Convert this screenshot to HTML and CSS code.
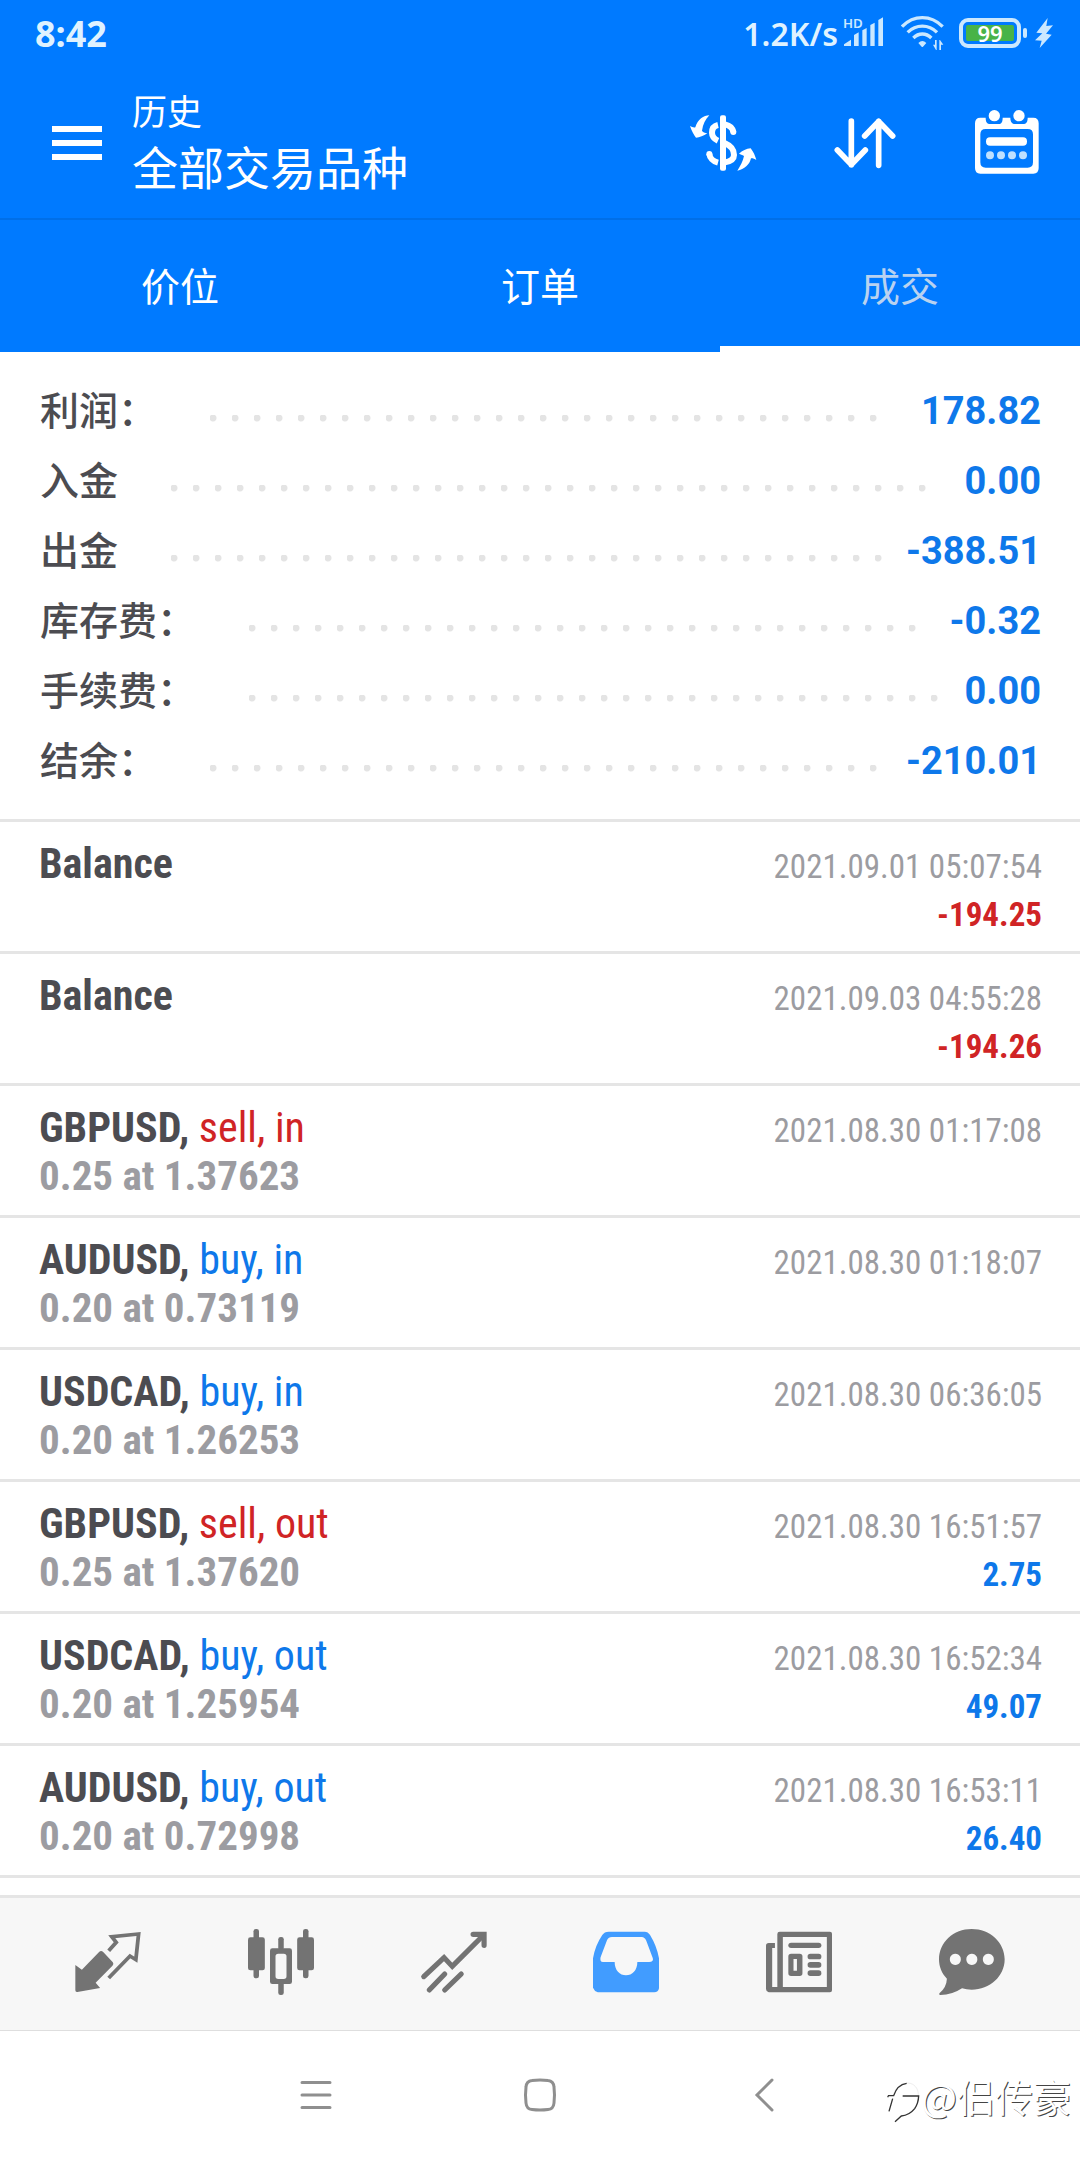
FILE: index.html
```html
<!DOCTYPE html>
<html lang="zh-CN">
<head>
<meta charset="utf-8">
<meta name="viewport" content="width=device-width, initial-scale=1">
<title>历史</title>
<link rel="stylesheet" href="styles.css">
</head>
<body>
<div class="app">
  <header class="header">
    <div class="status">
      <span class="status-clock">8:42</span>
      <span class="status-rate">1.2K/s</span>
      <svg class="status-signal" viewBox="0 -24 129 153" aria-hidden="true">
        <text x="0" y="37" class="hd">HD</text>
        <path d="M3 90V85L24 71V90ZM33 90V57L47 49V90ZM58 90V43L71 36V90ZM82 90V27L95 20V90ZM106 90V12L120 4V90Z"/>
      </svg>
      <svg class="status-wifi" viewBox="0 0 129 105" aria-hidden="true">
        <g class="line">
          <path d="M3 32C38-4 90-4 125 32"/>
          <path d="M20 49C45 24 83 24 108 49"/>
          <path d="M37 66C53 50 75 50 91 66"/>
        </g>
        <path d="M52 81Q64 69 76 81L66 92Q64 94 62 92ZM96 86H102V72H107V102H105ZM115 72V102H120V86H127L117 72Z"/>
      </svg>
      <span class="battery"><span class="battery-level">99</span></span>
      <svg class="status-bolt" viewBox="0 0 54 90" aria-hidden="true">
        <path d="M38 0L4 44L22 46L0 67L20 68L14 90L50 50L33 47L54 22L34 24Z"/>
      </svg>
    </div>
    <div class="toolbar">
      <button class="menu-btn" type="button" aria-label="菜单"><span></span><span></span><span></span></button>
      <div class="heading">
        <p class="heading-sub">历史</p>
        <h1 class="heading-main">全部交易品种</h1>
      </div>
      <div class="actions">
        <button class="action" type="button" aria-label="货币">
          <svg viewBox="0 0 216 216">
            <path d="M67 28C50 28 32 40 25 64C20 66 14 62 9 60C14 75 20 86 27 95C38 94 50 90 61 82C54 81 47 79 45 74C48 55 55 40 67 28Z"/>
            <path d="M151 194C160 180 168 165 171 150C166 146 160 145 156 143C166 134 178 128 191 127C199 137 205 150 208 162C202 158 196 156 192 157C188 176 172 190 151 194Z"/>
            <rect x="99" y="28" width="18" height="166" rx="6"/>
            <g class="stroke-m">
              <path d="M93 57C80 60 75 70 75 80C75 92 82 99 93 104"/>
              <path d="M114 55C128 58 137 66 139 78"/>
              <path d="M114 112C133 120 141 132 141 147C141 160 131 166 114 169"/>
              <path d="M67 143C68 155 78 166 93 170"/>
            </g>
            <circle cx="139" cy="78" r="9"/><circle cx="67" cy="144" r="9"/>
          </svg>
        </button>
        <button class="action" type="button" aria-label="排序">
          <svg viewBox="0 0 216 216">
            <g class="stroke-round">
              <path d="M67 45V176M25 132L67 176L109 132M149 178V46M107 90L149 46L191 90"/>
            </g>
          </svg>
        </button>
        <button class="action" type="button" aria-label="日期">
          <svg viewBox="0 0 216 216">
            <path fill-rule="evenodd" d="M28 35H44C44 48 48 54 58 54H83C91 54 95 48 95 35H118C118 48 124 54 132 54H156C166 54 170 48 170 35H187Q203 35 203 52V186Q203 203 187 203H28Q12 203 12 186V52Q12 35 28 35ZM44 69Q28 69 28 85V169Q28 185 44 185H170Q186 185 186 169V85Q186 69 170 69Z"/>
            <circle cx="70" cy="29" r="17"/><circle cx="144" cy="29" r="17"/>
            <rect x="45" y="94" width="123" height="25" rx="12"/>
            <g class="pale"><circle cx="57" cy="148" r="12"/><circle cx="90" cy="148" r="12"/><circle cx="123" cy="148" r="12"/><circle cx="156" cy="148" r="12"/></g>
          </svg>
        </button>
      </div>
    </div>
    <div class="tabs" role="tablist">
      <button class="tab" type="button" role="tab">价位</button>
      <button class="tab" type="button" role="tab">订单</button>
      <button class="tab tab-current" type="button" role="tab" aria-selected="true">成交</button>
    </div>
  </header>

  <main>
    <dl class="summary">
      <div class="sum-row"><dt>利润：</dt><dd class="dots"></dd><dd class="sum-value">178.82</dd></div>
      <div class="sum-row"><dt>入金</dt><dd class="dots"></dd><dd class="sum-value">0.00</dd></div>
      <div class="sum-row"><dt>出金</dt><dd class="dots"></dd><dd class="sum-value">-388.51</dd></div>
      <div class="sum-row"><dt>库存费：</dt><dd class="dots"></dd><dd class="sum-value">-0.32</dd></div>
      <div class="sum-row"><dt>手续费：</dt><dd class="dots"></dd><dd class="sum-value">0.00</dd></div>
      <div class="sum-row"><dt>结余：</dt><dd class="dots"></dd><dd class="sum-value">-210.01</dd></div>
    </dl>
    <ul class="deals">
      <li class="deal"><span class="deal-name">Balance</span><time class="deal-time">2021.09.01 05:07:54</time><span class="deal-size"></span><span class="deal-profit sell">-194.25</span></li>
      <li class="deal"><span class="deal-name">Balance</span><time class="deal-time">2021.09.03 04:55:28</time><span class="deal-size"></span><span class="deal-profit sell">-194.26</span></li>
      <li class="deal"><span class="deal-name">GBPUSD, <span class="deal-type sell">sell, in</span></span><time class="deal-time">2021.08.30 01:17:08</time><span class="deal-size">0.25 at 1.37623</span></li>
      <li class="deal"><span class="deal-name">AUDUSD, <span class="deal-type buy">buy, in</span></span><time class="deal-time">2021.08.30 01:18:07</time><span class="deal-size">0.20 at 0.73119</span></li>
      <li class="deal"><span class="deal-name">USDCAD, <span class="deal-type buy">buy, in</span></span><time class="deal-time">2021.08.30 06:36:05</time><span class="deal-size">0.20 at 1.26253</span></li>
      <li class="deal"><span class="deal-name">GBPUSD, <span class="deal-type sell">sell, out</span></span><time class="deal-time">2021.08.30 16:51:57</time><span class="deal-size">0.25 at 1.37620</span><span class="deal-profit buy">2.75</span></li>
      <li class="deal"><span class="deal-name">USDCAD, <span class="deal-type buy">buy, out</span></span><time class="deal-time">2021.08.30 16:52:34</time><span class="deal-size">0.20 at 1.25954</span><span class="deal-profit buy">49.07</span></li>
      <li class="deal"><span class="deal-name">AUDUSD, <span class="deal-type buy">buy, out</span></span><time class="deal-time">2021.08.30 16:53:11</time><span class="deal-size">0.20 at 0.72998</span><span class="deal-profit buy">26.40</span></li>
    </ul>
  </main>

  <nav class="bottom-nav">
    <button class="nav-btn" type="button" aria-label="行情">
      <svg viewBox="0 0 192 198" preserveAspectRatio="none">
        <path d="M1 108L20 122L70 69Q76 63 82 69L110 100Q114 105 109 110L60 161L73 177L7 189Q1 190 1 184Z"/>
        <path class="outline-11" d="M98 65L120 40L107 23L185 15L177 92L160 81L98 147"/>
      </svg>
    </button>
    <button class="nav-btn" type="button" aria-label="图表">
      <svg viewBox="0 0 192 198" preserveAspectRatio="none">
        <rect x="16" width="16" height="148" rx="7"/><rect x="160" width="16" height="148" rx="7"/>
        <rect y="25" width="49" height="99" rx="7"/><rect x="143" y="25" width="49" height="99" rx="7"/>
        <rect x="88" y="24" width="16" height="40" rx="7"/><rect x="88" y="158" width="16" height="40" rx="7"/>
        <path fill-rule="evenodd" d="M71 58H121Q128 58 128 65V158Q128 165 121 165H71Q64 165 64 158V65Q64 58 71 58ZM88 74Q80 74 80 82V142Q80 150 88 150H104Q112 150 112 142V82Q112 74 104 74Z"/>
      </svg>
    </button>
    <button class="nav-btn" type="button" aria-label="交易">
      <svg viewBox="0 0 192 198" preserveAspectRatio="none">
        <g class="outline-15">
          <path d="M8 143L67 86L91 112L180 20"/>
          <path d="M24 183L69 135M69 183L117 135"/>
        </g>
        <path d="M152 8H191V49Q191 57 184 57Q176 57 176 49V24H152Q144 24 144 16Q144 8 152 8Z"/>
      </svg>
    </button>
    <button class="nav-btn nav-current" type="button" aria-label="历史">
      <svg viewBox="0 0 192 198" preserveAspectRatio="none">
        <path fill-rule="evenodd" d="M46 8H150Q160 8 166 18Q186 52 192 88V178Q190 190 178 190H14Q4 187 0 176V88Q6 50 27 18Q33 8 46 8ZM55 24Q45 24 41 33L22 85Q19 99 29 99H63C63 124 78 139 96 139C114 139 129 124 129 99H163Q177 99 174 88L155 35Q150 24 142 24Z"/>
      </svg>
    </button>
    <button class="nav-btn" type="button" aria-label="新闻">
      <svg viewBox="0 0 192 198" preserveAspectRatio="none">
        <path fill-rule="evenodd" d="M40 8H186Q192 8 192 14V184Q192 190 186 190H8Q0 188 0 180V50Q0 42 8 42H26V57H18V174H33V15Q33 8 40 8ZM49 24V174H177V24Z"/>
        <rect x="65" y="41" width="96" height="16" rx="8"/>
        <path fill-rule="evenodd" d="M73 74H98Q106 74 106 82V133Q106 141 98 141H73Q65 141 65 133V82Q65 74 73 74ZM80 90V125H90V90Z"/>
        <rect x="121" y="74" width="40" height="17" rx="8"/><rect x="121" y="99" width="40" height="17" rx="8"/><rect x="121" y="124" width="40" height="17" rx="8"/>
      </svg>
    </button>
    <button class="nav-btn" type="button" aria-label="消息">
      <svg viewBox="0 0 192 198" preserveAspectRatio="none">
        <path fill-rule="evenodd" d="M95 0C148 0 191 40 191 91C191 142 148 182 95 182Q80 182 67 178Q38 198 4 198Q-2 197 2 192Q22 174 23 149C8 133 0 114 0 91C0 40 42 0 95 0ZM47 74A16 17 0 1 0 48 74ZM95 74A16 17 0 1 0 96 74ZM143 74A16 17 0 1 0 144 74Z"/>
      </svg>
    </button>
  </nav>

  <nav class="system-nav">
    <button class="sys-btn" type="button" aria-label="最近任务"><svg viewBox="0 0 36 36"><path d="M4 5.500H32M4 18H32M4 30.500H32"/></svg></button>
    <button class="sys-btn" type="button" aria-label="主屏幕"><svg viewBox="0 0 36 36"><path d="M10 3.500Q18 2.500 26 3.500Q31.500 4 32 10Q33 18 32 26Q31.500 32 26 32.500Q18 33.500 10 32.500Q4.500 32 4 26Q3 18 4 10Q4.500 4 10 3.500Z"/></svg></button>
    <button class="sys-btn" type="button" aria-label="返回"><svg viewBox="0 0 36 36"><path d="M26 3L11 18L26 33"/></svg></button>
    <div class="watermark">
      <svg viewBox="0 0 105 135" aria-hidden="true">
        <path class="mark-light" d="M8 52H22C28 30 44 16 66 15C84 16 96 30 97 48C98 84 80 110 50 112"/>
        <path class="mark-dark" d="M6 53H23C29 34 41 19 62 16M6 53V58M20 62L9 100M50 54H98Q97 76 86 92Q70 112 46 114L27 131"/>
      </svg>
      <span>@侣传豪</span>
    </div>
  </nav>
</div>
</body>
</html>
```

FILE: styles.css
```css
* { box-sizing: border-box; margin: 0; padding: 0; }

:root {
  --blue: #007aff;
  --link: #0e78ea;
  --red: #d02425;
  --ink: #4c4c51;
  --muted: #9c9ca1;
  --rule: #e5e5e5;
  --icon: #737373;
}

body {
  background: #fff;
  color: var(--ink);
  font-family: Roboto, "Noto Sans CJK SC", sans-serif;
}

button { border: 0; background: none; color: inherit; font: inherit; }
svg { display: block; }
ul { list-style: none; }

.app { display: flex; flex-direction: column; min-height: 100vh; }

.header { background: var(--blue); color: #fff; }

/* Status bar */
.status {
  display: flex;
  align-items: center;
  height: 66px;
  padding: 0 27px 0 35px;
  color: #dff2ff;
  fill: #cbe8ff;
  font-family: "Noto Sans", sans-serif;
  font-size: 36px;
  font-weight: 700;
}
.status-clock { flex: 1; }
.status-rate { font-size: 32px; font-weight: 600; }
.status-signal { width: 43px; height: 51px; margin-left: 5px; }
.status-wifi { width: 43px; height: 35px; margin-left: 15px; }
.status-wifi .line { fill: none; stroke: #cbe8ff; stroke-width: 10; }
.hd { font: 600 40px "Noto Sans", sans-serif; }
.battery {
  position: relative;
  width: 62px;
  height: 30px;
  margin-left: 15px;
  padding: 3px;
  border: 4px solid #cbe8ff;
  border-radius: 9px;
}
.battery::after {
  content: "";
  position: absolute;
  top: 6px;
  right: -10px;
  width: 4px;
  height: 10px;
  border-radius: 2px;
  background: #cbe8ff;
}
.battery-level {
  display: block;
  height: 16px;
  border-radius: 2px;
  background: #48b348;
  color: #fff;
  font-size: 22px;
  font-weight: 600;
  line-height: 17px;
  text-align: center;
}
.status-bolt { width: 18px; height: 30px; margin-left: 14px; }

/* Title bar */
.toolbar {
  display: flex;
  align-items: center;
  height: 154px;
  padding: 0 2px 0 52px;
  border-bottom: 2px solid #006fe8;
}
.menu-btn { display: flex; flex-direction: column; gap: 8px; width: 50px; padding-top: 2px; }
.menu-btn span { height: 6px; background: #fff; }
.heading { flex: 1; margin-left: 30px; }
.heading-sub { font-size: 35px; line-height: 54px; }
.heading-main { font-size: 46px; font-weight: 400; line-height: 56px; }
.actions { display: flex; }
.action { display: flex; justify-content: center; width: 142px; fill: #fff; }
.action svg { width: 72px; height: 72px; }
.stroke-m { fill: none; stroke: #fff; stroke-width: 18; }
.stroke-round { fill: none; stroke: #fff; stroke-width: 17; stroke-linecap: round; stroke-linejoin: round; }
.pale { fill: #bfe0ff; }

/* Tabs */
.tabs { display: grid; grid-template-columns: repeat(3, 1fr); }
.tab {
  height: 132px;
  padding-top: 2px;
  border-bottom: 6px solid var(--blue);
  font-size: 39px;
}
.tab-current { border-bottom-color: #fff; color: #b9d2f0; }

/* Totals */
.summary { padding: 23px 39px 24px 40px; border-bottom: 3px solid var(--rule); }
.sum-row { display: flex; align-items: center; height: 70px; font-size: 39px; }
.sum-row dt { padding-bottom: 4px; font-weight: 500; }
.dots { flex: 1; margin: 16px 8px 0 53px; }
.dots::before {
  content: "";
  display: block;
  width: round(down, 100%, 22px);
  height: 7px;
  background: radial-gradient(circle at 3px 3px, #e4e4e4 3px, transparent 4px) 0 0 / 22px 7px repeat-x;
}
.sum-value { padding-top: 2px; color: var(--link); font-size: 38px; font-weight: 700; }

/* Deals */
.deals { padding-bottom: 17px; }
.deal {
  display: grid;
  grid-template-columns: 1fr auto;
  grid-template-rows: 48px 48px;
  align-items: baseline;
  min-height: 132px;
  padding: 18px 38px 15px 39px;
  border-bottom: 3px solid var(--rule);
  font-family: "Roboto Condensed", Roboto, sans-serif;
  font-size: 42px;
  font-weight: 700;
  line-height: 48px;
}
.deal-type { font-weight: 400; }
.deal-size { color: var(--muted); font-size: 41px; }
/* keeps a baseline in rows that have no volume */
.deal-size::before { content: "\200b"; }
.deal-time { color: var(--muted); font-size: 33px; font-weight: 400; }
.deal-profit { font-size: 33px; text-align: right; }
.sell { color: var(--red); }
.buy { color: var(--link); }

/* Bottom navigation */
.bottom-nav {
  display: grid;
  grid-template-columns: repeat(6, 1fr);
  height: 136px;
  margin-top: auto;
  padding: 0 22px 4px;
  border-top: 3px solid var(--rule);
  border-bottom: 1px solid #dedede;
  background: #f7f7f7;
}
.nav-btn { display: flex; align-items: center; justify-content: center; fill: var(--icon); }
.nav-btn svg { width: 66px; height: 66px; overflow: visible; }
.nav-current { fill: #419cff; }
.outline-11 { fill: none; stroke: var(--icon); stroke-width: 11; }
.outline-15 { fill: none; stroke: var(--icon); stroke-width: 15; stroke-linecap: round; }

/* System navigation */
.system-nav {
  position: relative;
  display: flex;
  justify-content: center;
  height: 129px;
  padding-bottom: 2px;
}
.sys-btn { display: flex; align-items: center; justify-content: center; width: 224px; }
.sys-btn svg { width: 36px; height: 36px; fill: none; stroke: #8f8f8f; stroke-width: 3; stroke-linecap: round; }
.watermark {
  position: absolute;
  right: 9px;
  bottom: 37px;
  display: flex;
  align-items: center;
  color: #fff;
  font-family: "Noto Sans CJK SC", sans-serif;
  font-size: 38px;
  line-height: 54px;
  text-shadow: 1px 1px 0 #444;
}
.watermark svg { width: 35px; height: 45px; margin-top: 8px; }
.mark-light { fill: none; stroke: #eee; stroke-width: 3; }
.mark-dark { fill: none; stroke: #333; stroke-width: 4; }
```
